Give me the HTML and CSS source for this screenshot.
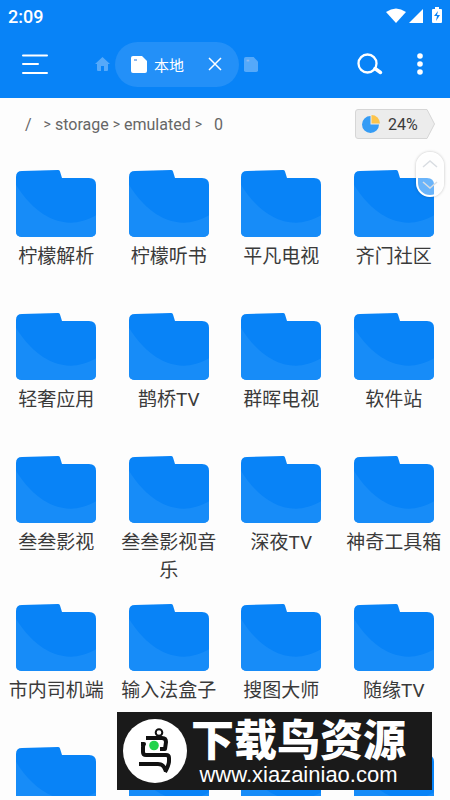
FILE: index.html
```html
<!DOCTYPE html>
<html lang="zh-CN">
<head>
<meta charset="utf-8">
<meta name="viewport" content="width=device-width, initial-scale=1">
<title>本地</title>
<link rel="stylesheet" href="styles.css">
</head>
<body>
<svg class="defs" aria-hidden="true">
  <symbol id="folder" viewBox="0 0 80 68" preserveAspectRatio="none">
    <path fill="#0883f7" d="M6 1 42 0Q43.500 0 44 1.500L46 8H73Q80 8 80 15V62Q80 68 74 68H6Q0 68 0 62V7Q0 1 6 1Z"/>
    <path fill="#178cf8" d="M0 15C18 45 48 65 80 46V62Q80 68 74 68H6Q0 68 0 62Z"/>
  </symbol>
  <symbol id="card" viewBox="0 0 16 17">
    <path fill="currentColor" d="M2 0H11L16 5V15Q16 17 14 17H2Q0 17 0 15V2Q0 0 2 0Z"/>
    <path class="notch" d="M3 3H6V5H3Z"/>
  </symbol>
</svg>
<header class="top">
  <div class="status">
    <span>2:09</span>
    <svg width="58" height="18" viewBox="0 0 58 18" fill="#fff" aria-hidden="true">
      <path d="M0 5Q10-2 20 5L10 16Z"/>
      <path d="M37 2V16H23Z"/>
      <path fill-rule="evenodd" d="M49 0H53V2H55Q56 2 56 3V15Q56 16 55 16H47Q46 16 46 15V3Q46 2 47 2H49ZM52 4 48 9H51L50 14 54 8H51Z"/>
    </svg>
  </div>
  <nav class="bar">
    <button class="icon menu" aria-label="菜单">
      <svg width="26" height="21" viewBox="0 0 26 21" stroke="#fff" stroke-width="2" stroke-linecap="round"><path d="M1 1.500H25M1 10H16M1 19H25"/></svg>
    </button>
    <div class="tabs">
      <a class="ghost" href="#" aria-label="主页">
        <svg width="15" height="14" viewBox="0 0 15 14" fill="currentColor"><path d="M7.500 0 15 7H13V13Q13 14 12 14H9V9H6V14H3Q2 14 2 13V7H0Z"/></svg>
      </a>
      <div class="tab">
        <svg width="16" height="17"><use href="#card"/></svg>
        <span>本地</span>
        <button class="icon close" aria-label="关闭">
          <svg width="14" height="14" viewBox="0 0 14 14" stroke="#fff" stroke-width="1.500"><path d="M1 1 13 13M13 1 1 13"/></svg>
        </button>
      </div>
      <a class="ghost" href="#" aria-label="存储">
        <svg width="14" height="15"><use href="#card"/></svg>
      </a>
    </div>
    <button class="icon search" aria-label="搜索">
      <svg width="26" height="22" viewBox="0 0 26 22" fill="none" stroke="#fff" stroke-linecap="round"><circle cx="10.500" cy="10.500" r="9" stroke-width="2.300"/><path stroke-width="3.500" d="M18 15.500 23.500 19.500"/></svg>
    </button>
    <button class="icon more" aria-label="更多">
      <svg width="6" height="22" viewBox="0 0 6 22" fill="#fff"><circle cx="3" cy="3" r="2.800"/><circle cx="3" cy="11" r="2.800"/><circle cx="3" cy="19" r="2.800"/></svg>
    </button>
  </nav>
</header>
<main class="main">
  <div class="pathbar">
    <nav class="crumbs">
      <a class="root" href="#">/</a><i>&gt;</i><a href="#">storage</a><i>&gt;</i><a href="#">emulated</a><i>&gt;</i><a class="leaf" href="#">0</a>
    </nav>
    <div class="usage">
      <svg class="shape" viewBox="0 0 80 30" preserveAspectRatio="none" aria-hidden="true"><path fill="#ececec" stroke="#d6d6d6" d="M3 .5H72L79.500 15 72 29.500H3Q.5 29.500 .5 27V3Q.5 .5 3 .5Z"/></svg>
      <svg width="18" height="18" viewBox="0 0 18 18" aria-hidden="true"><path fill="#359cf5" d="M8.500 1A8.500 8.500 0 1 0 17 9.500H8.500Z"/><path fill="#fcc44c" d="M9.500 0A8.500 8.500 0 0 1 18 8.500H9.500Z"/></svg>
      <span>24%</span>
    </div>
  </div>
  <div class="grid">
    <a class="item" href="#"><svg><use href="#folder"/></svg><span>柠檬解析</span></a>
    <a class="item" href="#"><svg><use href="#folder"/></svg><span>柠檬听书</span></a>
    <a class="item" href="#"><svg><use href="#folder"/></svg><span>平凡电视</span></a>
    <a class="item" href="#"><svg><use href="#folder"/></svg><span>齐门社区</span></a>
    <a class="item" href="#"><svg><use href="#folder"/></svg><span>轻奢应用</span></a>
    <a class="item" href="#"><svg><use href="#folder"/></svg><span>鹊桥TV</span></a>
    <a class="item" href="#"><svg><use href="#folder"/></svg><span>群晖电视</span></a>
    <a class="item" href="#"><svg><use href="#folder"/></svg><span>软件站</span></a>
    <a class="item" href="#"><svg><use href="#folder"/></svg><span>叁叁影视</span></a>
    <a class="item" href="#"><svg><use href="#folder"/></svg><span>叁叁影视音乐</span></a>
    <a class="item" href="#"><svg><use href="#folder"/></svg><span>深夜TV</span></a>
    <a class="item" href="#"><svg><use href="#folder"/></svg><span>神奇工具箱</span></a>
    <a class="item" href="#"><svg><use href="#folder"/></svg><span>市内司机端</span></a>
    <a class="item" href="#"><svg><use href="#folder"/></svg><span>输入法盒子</span></a>
    <a class="item" href="#"><svg><use href="#folder"/></svg><span>搜图大师</span></a>
    <a class="item" href="#"><svg><use href="#folder"/></svg><span>随缘TV</span></a>
    <a class="item" href="#"><svg><use href="#folder"/></svg></a>
    <a class="item" href="#"><svg><use href="#folder"/></svg></a>
    <a class="item" href="#"><svg><use href="#folder"/></svg></a>
    <a class="item" href="#"><svg><use href="#folder"/></svg></a>
  </div>
  <button class="scroller" aria-label="滚动">
    <svg width="16" height="30" viewBox="0 0 16 30" fill="none" stroke="#d9dde2" stroke-width="1.500"><path d="M1 7 8 1 15 7M1 22 8 28 15 22"/></svg>
  </button>
</main>
<aside class="brand">
  <svg width="64" height="64" viewBox="0 0 64 64" fill="none" stroke="#111" aria-hidden="true">
    <circle cx="32" cy="32" r="32" fill="#fff" stroke="none"/>
    <circle cx="36" cy="13.500" r="3.300" stroke-width="2"/>
    <path stroke-width="4" stroke-linejoin="round" d="M23 19H39Q43 19 43 23L42 30H37"/>
    <path stroke-width="4" stroke-linejoin="round" d="M18 25H21Q20 26 20 29V33Q20 36 23 36H43Q46 36 46 39V42Q46 46 42 53M16 45H35Q39 45 41 48L43 52"/>
    <circle cx="31" cy="26.500" r="4.800" fill="#21d34b" stroke="none"/>
  </svg>
  <div class="brand-text">
    <strong>下载鸟资源</strong>
    <span>www.xiazainiao.com</span>
  </div>
</aside>
</body>
</html>
```
FILE: styles.css
```css
* { box-sizing: border-box; }
body {
  margin: 0;
  height: 100vh;
  padding-bottom: 4px;
  display: flex;
  flex-direction: column;
  position: relative;
  overflow: hidden;
  background: #fdfdfd;
  color: #3a3a3a;
  font-family: Roboto, "Noto Sans CJK SC", sans-serif;
}
a { color: inherit; text-decoration: none; }
svg { display: block; flex: none; }
.defs { position: absolute; width: 0; height: 0; }
.icon { border: 0; padding: 0; background: none; }

.top { background: #0883f7; color: #fff; }
.status {
  height: 32px;
  padding: 0 6px 0 8px;
  display: flex;
  align-items: center;
  justify-content: space-between;
  font-size: 18px;
  font-weight: 500;
}
.bar {
  height: 66px;
  padding: 0 27px 2px 22px;
  display: flex;
  align-items: center;
}
.tabs {
  flex: 1;
  display: flex;
  align-items: center;
  gap: 5px;
  padding-left: 47px;
}
.ghost { color: #55a9fa; }
.ghost .notch { fill: #0883f7; }
.tab {
  display: flex;
  align-items: center;
  height: 45px;
  padding: 0 17px 0 16px;
  border-radius: 23px;
  background: #2390f8;
  font-size: 15px;
}
.notch { fill: #8fb8ee; }
.tab span { margin-left: 7px; }
.close { margin-left: 24px; }
.search { margin-right: 34px; }

.main {
  flex: 1;
  min-height: 0;
  position: relative;
  overflow: hidden;
}
.pathbar {
  display: flex;
  align-items: center;
  justify-content: space-between;
  height: 72px;
  padding: 0 15px 20px 25px;
}
.crumbs {
  display: flex;
  align-items: center;
  gap: 4px;
  font-size: 16px;
  color: #666;
}
.crumbs i { font-style: normal; font-size: 14px; }
.root { margin-right: 8px; }
.leaf { margin-left: 8px; }
.usage {
  position: relative;
  width: 80px;
  height: 30px;
  display: flex;
  align-items: center;
  gap: 8px;
  padding-left: 7px;
  font-size: 16px;
}
.shape { position: absolute; inset: 0; width: 100%; height: 100%; }
.shape ~ * { position: relative; }

.grid {
  display: grid;
  grid-template-columns: repeat(4, 1fr);
  grid-auto-rows: minmax(124px, auto);
  row-gap: 19px;
}
.item {
  display: flex;
  flex-direction: column;
  align-items: center;
  gap: 6px;
  padding: 0 8px;
  font-size: 19px;
  line-height: 28px;
  text-align: center;
}
.item svg { width: 80px; height: 67px; }

.scroller {
  position: absolute;
  top: 54px;
  right: 6px;
  width: 28px;
  height: 45px;
  display: flex;
  align-items: center;
  justify-content: center;
  padding: 0;
  border: 2px solid #fff;
  border-radius: 14px;
  background: rgba(255, 255, 255, 0.4);
  box-shadow: 0 0 3px rgba(0, 0, 0, 0.25);
}

.brand {
  position: absolute;
  right: 18px;
  bottom: 10px;
  width: 315px;
  height: 78px;
  display: flex;
  align-items: center;
  gap: 4px;
  padding-left: 6px;
  background: #1a1a1a;
  color: #fff;
}
.brand-text {
  display: flex;
  flex-direction: column;
  align-items: center;
  gap: 8px;
  padding-top: 4px;
}
.brand strong {
  font-size: 43px;
  font-weight: 900;
  line-height: 36px;
  font-family: "Noto Sans CJK SC", sans-serif;
}
.brand span {
  font-size: 22px;
  line-height: 24px;
  font-family: "Liberation Sans", sans-serif;
}
```
